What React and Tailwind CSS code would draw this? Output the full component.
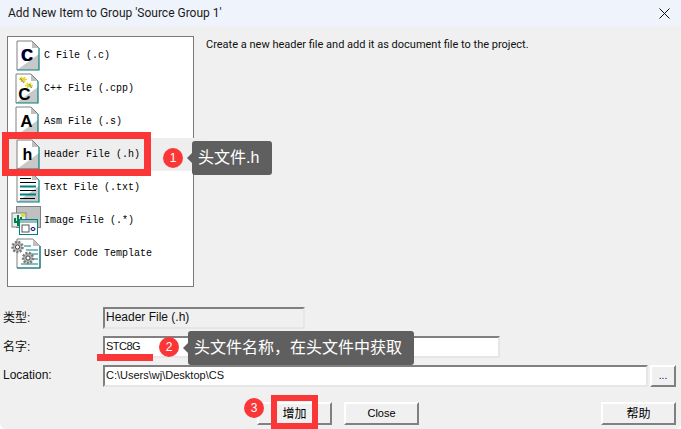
import React from "react";

const ui = "font-['Roboto','Noto_Sans_CJK_SC',sans-serif]";
const cjk = "font-['Liberation_Sans','Noto_Sans_CJK_SC',sans-serif]";

const DocIcon = ({ children, className = "" }) => (
  <svg width="24" height="31" viewBox="0 0 24 31" className={className}>
    <path d="M1 1H16L23 8V30H1Z" fill="#fff" />
    <path d="M1 30L23 14V30Z" fill="#c8c8c8" />
    <path d="M16 1V8H23Z" fill="#c0c0c0" />
    <path d="M1 30V1H16L23 8" fill="none" stroke="#808080" />
    <path d="M1 30H23V8" fill="none" stroke="#008080" strokeWidth="1.2" />
    {children}
  </svg>
);

const Letter = ({ ch, x = 11.5, y = 21, size = 16, fill = "#000" }) => (
  <text x={x} y={y} textAnchor="middle" fontFamily="Liberation Sans" fontWeight="700" fontSize={size} fill={fill}>
    {ch}
  </text>
);

const CIcon = () => (
  <DocIcon>
    <Letter ch="C" x={10.5} fill="#0000d0" />
    <Letter ch="C" x={11.5} />
  </DocIcon>
);

const CppIcon = () => (
  <DocIcon>
    <path d="M6 4L10 9M10 4L6 9M4 6.5H12M12 10L16 15M16 10L12 15M10 12.5H18" stroke="#e8d820" strokeWidth="1.6" fill="none" />
    <path d="M5 5L9 10M14 11L17 15" stroke="#808080" fill="none" />
    <Letter ch="C" x={9.5} y={27} size={17} />
  </DocIcon>
);

const TextIcon = () => (
  <DocIcon>
    <path d="M4 6.5H15M4 10.5H20M4 18.5H20M4 26.5H19" stroke="#000" fill="none" />
    <path d="M4 14.5H20M4 22.5H20" stroke="#008080" strokeWidth="2" fill="none" />
  </DocIcon>
);

const ImageIcon = () => (
  <svg width="31" height="31" viewBox="0 0 31 31">
    <rect x="5.5" y="1.5" width="24" height="21" fill="#c0c0c0" stroke="#808080" />
    <rect x="1" y="8" width="14" height="14" fill="#e4eef0" stroke="#808080" />
    <path d="M7 10V21M4 13V17H10V12" stroke="#008040" strokeWidth="2" fill="none" />
    <circle cx="12" cy="10" r="2" fill="#e8d820" />
    <rect x="8.5" y="14.5" width="18" height="15" fill="#fff" stroke="#008080" />
    <rect x="9" y="15" width="17" height="3" fill="#9bb" />
    <rect x="11" y="20" width="7" height="7" fill="#fff" stroke="#555" />
    <ellipse cx="22" cy="24" rx="2" ry="1.5" fill="none" stroke="#000080" />
  </svg>
);

const Gear = ({ cx, cy, r }) => (
  <g>
    <circle cx={cx} cy={cy} r={r} fill="#b8b8b8" stroke="#7a7a7a" strokeWidth="2.5" strokeDasharray="2 1.4" />
    <circle cx={cx} cy={cy} r={r / 2.4} fill="#fff" stroke="#444" />
  </g>
);

const TemplateIcon = () => (
  <svg width="30" height="31" viewBox="0 0 30 31">
    <path d="M6 1H22L29 8V30H6Z" fill="#fff" stroke="#808080" />
    <path d="M6 30H29V8" fill="none" stroke="#008080" strokeWidth="1.2" />
    <path d="M22 1V8H29Z" fill="#c0c0c0" />
    <path d="M13 8H20M15 12H27M15 16H27M19 21H27M10 26H27" stroke="#008080" fill="none" />
    <Gear cx={6.5} cy={9} r={5} />
    <Gear cx={17} cy={20} r={5} />
  </svg>
);

const items = [
  { label: "C File (.c)", icon: <CIcon />, box: "ml-[8px]" },
  { label: "C++ File (.cpp)", icon: <CppIcon />, box: "ml-[7px]" },
  { label: "Asm File (.s)", icon: <DocIcon><Letter ch="A" size={17} /></DocIcon>, box: "ml-[7px]" },
  { label: "Header File (.h)", icon: <DocIcon><Letter ch="h" size={16} /></DocIcon>, box: "ml-[8px]", active: true },
  { label: "Text File (.txt)", icon: <TextIcon />, box: "ml-[8px]" },
  { label: "Image File (.*)", icon: <ImageIcon />, box: "ml-[3px]" },
  { label: "User Code Template", icon: <TemplateIcon />, box: "ml-[3px]" },
];

const Field = ({ value, className = "", bg = "bg-white" }) => (
  <div className={`h-[22px] border-2 border-t-[#808080] border-l-[#808080] border-r-[#e6e6e6] border-b-[#e6e6e6] pl-[1px] pb-[2px] flex items-center leading-none text-[#111] ${cjk} ${bg} ${className}`}>
    {value}
  </div>
);

const Button = ({ label, className = "" }) => (
  <button className={`h-[23px] w-[75px] bg-[#f0f0f0] border-2 border-t-white border-l-white border-r-[#808080] border-b-[#808080] leading-none text-black ${cjk} ${className}`}>
    {label}
  </button>
);

const Bubble = ({ n, className }) => (
  <div className={`absolute w-[20px] h-[20px] rounded-full bg-[#fb3636] text-white text-[12px] flex items-center justify-center ${cjk} ${className}`}>
    {n}
  </div>
);

const Tip = ({ text, className }) => (
  <div className={`absolute h-[34px] rounded-[3px] bg-[#5f5f5f] text-white text-[16px] leading-none flex items-center ${cjk} ${className}`}>
    <span className="absolute left-[-5px] top-[12px] w-0 h-0 border-y-[5px] border-y-transparent border-r-[5px] border-r-[#5f5f5f]" />
    {text}
  </div>
);

export default function App() {
  return (
    <div className="relative w-[681px] h-[429px] overflow-hidden bg-[#f0f0f0] rounded-b-[6px]">
      {/* Title bar */}
      <div className="h-[26px] bg-[#eff3fb] flex items-center justify-between pl-[8px] pr-[11px]">
        <span className={`text-[12px] text-[#1a1a1a] ${ui}`}>Add New Item to Group 'Source Group 1'</span>
        <svg width="11" height="11" viewBox="0 0 11 11">
          <path d="M0.5 0.5L10.5 10.5M10.5 0.5L0.5 10.5" stroke="#111" />
        </svg>
      </div>

      {/* Item list and description */}
      <div className="flex pl-[7px] pt-[10px]">
        <div className="w-[187px] h-[251px] bg-white border border-[#7a7a7a] pt-[2px]">
          {items.map((item) => (
            <div key={item.label} className={`h-[33px] flex items-center w-[200px] ${item.active ? "bg-[#eeeeee]" : ""}`}>
              <div className="w-[36px] flex shrink-0">
                <div className={item.box}>{item.icon}</div>
              </div>
              <span className="text-[10px] leading-none text-black font-['Liberation_Mono',monospace] whitespace-pre">{item.label}</span>
            </div>
          ))}
        </div>
        <p className={`ml-[12px] mt-[1px] text-[11px] leading-[16px] text-[#111] ${ui}`}>
          Create a new header file and add it as document file to the project.
        </p>
      </div>

      {/* Form */}
      <div className={`mt-[20px] pl-[3px] pr-[5px] flex flex-col gap-[7px] text-[12px] text-[#111] ${cjk}`}>
        <div className="flex items-center">
          <span className="w-[100px]">类型:</span>
          <Field value="Header File (.h)" bg="bg-[#f0f0f0]" className="w-[202px] text-[12px]" />
        </div>
        <div className="flex items-center">
          <span className="w-[100px]">名字:</span>
          <Field value="STC8G" className="w-[397px] text-[11px] tracking-[-0.5px]" />
        </div>
        <div className="flex items-center">
          <span className="w-[100px] pb-[2px]">Location:</span>
          <Field value="C:\Users\wj\Desktop\CS" className="w-[545px] text-[11px]" />
          <button className="ml-[2px] h-[22px] w-[26px] bg-[#f0f0f0] border-2 border-t-white border-l-white border-r-[#808080] border-b-[#808080] text-[10px] leading-none text-[#000080]">...</button>
        </div>
      </div>

      {/* Buttons */}
      <div className="mt-[15px] pl-[257px] pr-[5px] flex">
        <Button label="增加" className="text-[12px]" />
        <Button label="Close" className="ml-[12px] text-[11px]" />
        <Button label="帮助" className="ml-auto text-[12px]" />
      </div>

      {/* Annotations */}
      <div className="absolute left-[2px] top-[132px] w-[149px] h-[44px] border-[7px] border-[#fb3636]" />
      <Bubble n="1" className="left-[163px] top-[148px]" />
      <Tip text="头文件.h" className="left-[192px] top-[141px] w-[80px] pl-[6px]" />

      <div className="absolute left-[97px] top-[354px] w-[56px] h-[7px] bg-[#fb3636]" />
      <Bubble n="2" className="left-[159px] top-[337px]" />
      <Tip text={"头文件名称\uFF0C在头文件中获取"} className="left-[188px] top-[331px] w-[226px] pl-[6px]" />

      <div className="absolute left-[271px] top-[395px] w-[47px] h-[34px] border-[6px] border-[#fb3636]" />
      <Bubble n="3" className="left-[244px] top-[398px]" />
    </div>
  );
}
